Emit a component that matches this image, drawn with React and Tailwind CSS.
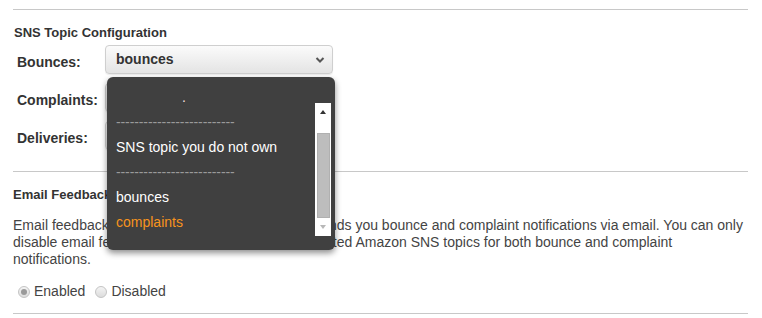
import React from "react";

const dashes = "--------------------------";

function Select({ value }) {
  return (
    <div className="w-[228px] h-[29px] rounded-[4px] border border-[#cfcfcf] bg-gradient-to-b from-[#fbfbfb] to-[#e4e4e4] flex items-center justify-between pl-[10px] pr-[6px] shadow-[0_1px_1px_rgba(0,0,0,0.08)]">
      <span className="text-[14px] font-bold text-[#333]">{value}</span>
      <svg width="12" height="8" viewBox="0 0 12 8">
        <path d="M2.5 2 L6 5.5 L9.5 2" fill="none" stroke="#555" strokeWidth="2" />
      </svg>
    </div>
  );
}

function Row({ label, value }) {
  return (
    <div className="flex items-center h-[29px]">
      <span className="w-[91px] pl-[3px] pt-[5px] text-[14px] font-bold text-[#333]">{label}</span>
      <Select value={value} />
    </div>
  );
}

function Radio({ checked, label }) {
  return (
    <label className="flex items-center gap-[4px]">
      <span className="w-[12px] h-[12px] rounded-full border border-[#c4c4c4] bg-gradient-to-b from-[#f4f4f4] to-[#dcdcdc] flex items-center justify-center">
        {checked && <span className="w-[6px] h-[6px] rounded-full bg-[#9a9a9a]" />}
      </span>
      <span>{label}</span>
    </label>
  );
}

function Dropdown() {
  const items = [
    { t: ".", c: "text-[#f3dede] pl-[66px]" },
    { t: dashes, c: "text-[#9a9a9a] tracking-[-0.1px]" },
    { t: "SNS topic you do not own", c: "text-white" },
    { t: dashes, c: "text-[#9a9a9a] tracking-[-0.1px]" },
    { t: "bounces", c: "text-white" },
    { t: "complaints", c: "text-[#f7941d]" },
  ];
  return (
    <div className="absolute left-[94px] top-[67px] w-[228px] h-[173px] rounded-[6px] bg-[#404040] shadow-[0_3px_6px_rgba(0,0,0,0.45)] z-10 flex pt-[8px]">
      <div className="flex-1 pl-[9px] text-[14px]">
        {items.map((it, i) => (
          <div key={i} className={`h-[25px] flex items-center whitespace-nowrap ${it.c}`}>
            {it.t}
          </div>
        ))}
      </div>
      <div className="mt-[18px] mr-[4px] w-[16px] h-[133px] bg-white flex flex-col items-center">
        <svg width="16" height="16" viewBox="0 0 16 16" className="mt-[1px]">
          <path d="M5 10 L8 6 L11 10 Z" fill="#333" />
        </svg>
        <div className="w-[13px] h-[85px] mt-[13px] bg-[#bdbdbd] border border-[#b0b0b0]" />
        <svg width="16" height="16" viewBox="0 0 16 16" className="mt-[1px]">
          <path d="M5 6 L8 10 L11 6 Z" fill="#b8b8b8" />
        </svg>
      </div>
    </div>
  );
}

export default function App() {
  return (
    <div className="w-[762px] h-[318px] bg-white pt-[9px] px-[13px] font-['Liberation_Sans',Arial,sans-serif] text-[#444] overflow-hidden">
      <div className="w-[735px] border-t border-[#c8c8c8]" />

      <div className="relative pl-[1px] pt-[15px]">
        <h3 className="text-[13px] leading-[16px] font-bold text-[#333]">SNS Topic Configuration</h3>
        <div className="mt-[4px] flex flex-col gap-[9px]">
          <Row label="Bounces:" value="bounces" />
          <Row label="Complaints:" value="complaints" />
          <Row label="Deliveries:" value="deliveries" />
        </div>
        <Dropdown />
      </div>

      <div className="mt-[21px] w-[735px] border-t border-[#c8c8c8]" />

      <h3 className="mt-[15px] text-[13px] leading-[16px] font-bold text-[#333]">Email Feedback Forwarding</h3>
      <p className="mt-[14px] w-[735px] text-[14px] leading-[17px]">
        Email feedback forwarding means Amazon SES sends you bounce and complaint notifications via email. You can only
        disable email feedback forwarding if you have selected Amazon SNS topics for both bounce and complaint
        notifications.
      </p>

      <div className="mt-[13px] flex items-center gap-[10px] pl-[5px] text-[14px]">
        <Radio checked label="Enabled" />
        <Radio label="Disabled" />
      </div>

      <div className="mt-[11px] w-[735px] border-t border-[#c8c8c8]" />
    </div>
  );
}
